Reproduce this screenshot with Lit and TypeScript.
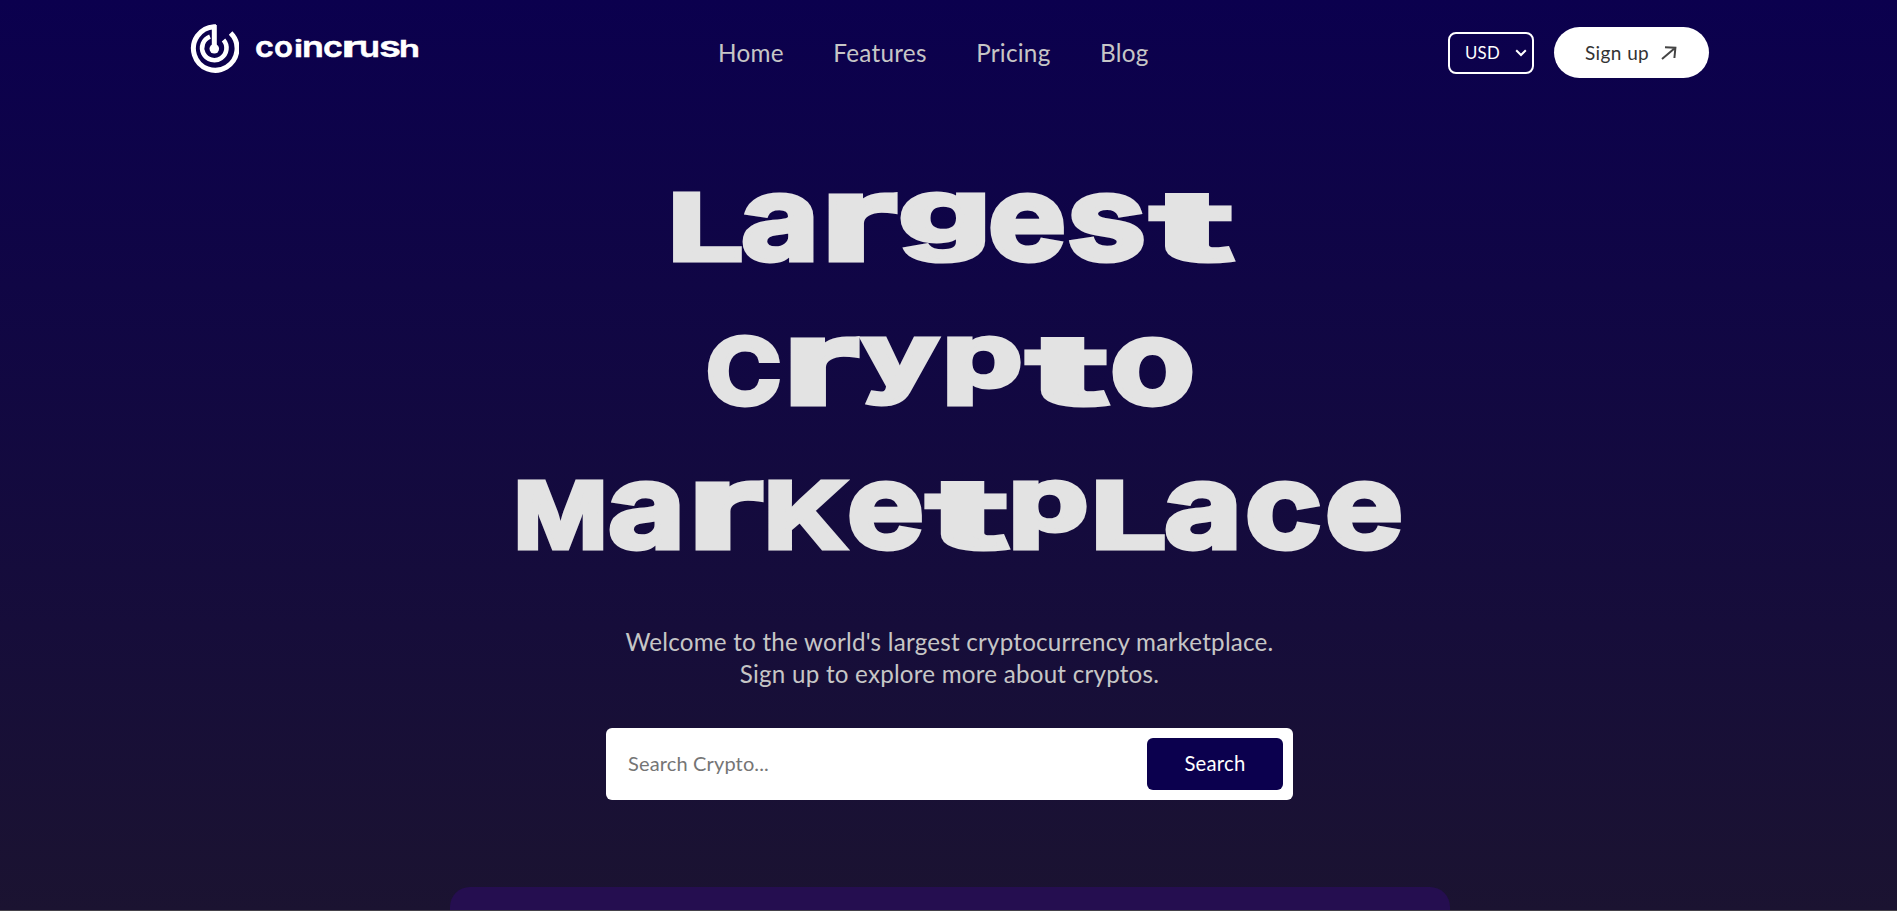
import { LitElement, html, svg, css } from "lit";
import { customElement, property } from "lit/decorators.js";

// One letter of a unicase word: character, left edge, right edge, form.
type Glyph = [string, number, number, string];

// Share of the em that each form occupies above and below the baseline.
const FORMS: Record<string, { up: number; down: number }> = {
  cap: { up: 0.727, down: 0 },
  upper: { up: 0.727, down: 0 },
  low: { up: 0.56, down: 0 },
  tall: { up: 0.74, down: 0 },
  tee: { up: 0.69, down: 0 },
  desc: { up: 0.56, down: 0.2 },
};

@customElement("unicase-word")
class UnicaseWord extends LitElement {
  @property({ attribute: false }) glyphs: Glyph[] = [];
  @property({ type: Number }) width = 0;
  @property({ type: Number }) height = 0;
  @property({ type: Number }) stroke = 5;
  @property({ type: Number }) weight = 750;

  static styles = css`
    :host { display: block; letter-spacing: 0; }
    svg { display: block; overflow: visible; }
    text {
      font-family: Inter, "Liberation Sans", sans-serif;
      fill: currentColor;
      stroke: currentColor;
      stroke-linejoin: miter;
    }
    .upper { text-transform: uppercase; }
  `;

  render() {
    const s = this.stroke;
    const h = this.height - s;
    return html`<svg width=${this.width} height=${this.height}>
      <text stroke-width=${s} font-weight=${this.weight}>${this.glyphs.map(([ch, x0, x1, form]) => {
        const f = FORMS[form];
        const size = h / (f.up + f.down);
        return svg`<tspan class=${form} x=${x0} y=${s / 2 + size * f.up} font-size=${size} textLength=${x1 - x0} lengthAdjust="spacingAndGlyphs">${ch}</tspan>`;
      })}</text>
    </svg>`;
  }
}

const LOGO: Glyph[] = [
  ["c", -1, 18, "low"], ["o", 18, 37, "low"], ["i", 38, 47, "tall"], ["n", 46, 68, "low"],
  ["c", 67, 87, "low"], ["r", 85, 107, "low"], ["u", 103, 124, "low"], ["s", 123, 145, "low"], ["h", 143, 164, "tall"],
];
const LARGEST: Glyph[] = [
  ["L", -3, 72, "cap"], ["a", 70, 148, "low"], ["r", 150, 226, "low"], ["g", 228, 319, "desc"],
  ["e", 317, 395, "low"], ["s", 396, 475, "low"], ["t", 481, 562, "tee"],
];
const CRYPTO: Glyph[] = [
  ["C", -1, 74, "cap"], ["r", 76, 152, "low"], ["y", 155, 231, "desc"], ["p", 236, 315, "desc"],
  ["t", 321, 401, "tee"], ["o", 403, 488, "low"],
];
const MARKETPLACE: Glyph[] = [
  ["M", -3, 90, "cap"], ["a", 91, 168, "low"], ["r", 171, 246, "low"], ["k", 247, 330, "upper"],
  ["e", 330, 407, "low"], ["t", 411, 491, "tee"], ["p", 492, 571, "desc"], ["l", 574, 649, "upper"],
  ["a", 647, 725, "low"], ["c", 728, 805, "low"], ["e", 808, 886, "low"],
];

@customElement("app-root")
class AppRoot extends LitElement {
  static styles = css`
    :host {
      display: block;
      height: 911px;
      overflow: hidden;
      box-sizing: border-box;
      border-bottom: 1px solid #45424a;
      background: linear-gradient(#0b004e, #1b1331);
      font-family: Lato, "Open Sans", sans-serif;
      letter-spacing: 0.25px;
      color: #c6c6c6;
    }
    * { box-sizing: border-box; }
    header { height: 105px; padding: 0 188px 0 190px; display: grid; grid-template-columns: 528px 1fr auto; align-items: center; }
    .logo { display: flex; align-items: center; color: #fff; gap: 17px; padding-bottom: 8px; }
    .logo svg { display: block; }
    nav { display: flex; gap: 49.5px; font-size: 24.3px; padding-bottom: 1px; }
    .actions { display: flex; align-items: center; gap: 20px; }
    .currency { width: 86px; height: 42px; border: 2px solid #fff; border-radius: 8px; color: #fff; display: flex; align-items: center; justify-content: space-between; padding: 0 5px 0 15px; font-size: 16.8px; }
    .signup { width: 155px; height: 51px; border-radius: 26px; background: #fff; color: #333; display: flex; align-items: center; gap: 12px; padding-left: 31px; font-size: 19px; }
    .signup span { padding-bottom: 1px; letter-spacing: 0.4px; }
    main { display: flex; flex-direction: column; align-items: center; padding: 86px 0 0 2px; }
    h1 { margin: 0; color: #e3e3e3; display: flex; flex-direction: column; align-items: center; gap: 73px; }
    .marketplace { padding-left: 18px; }
    .largest { padding-left: 4px; }
    p { margin: 76px 0 0; font-size: 24.2px; line-height: 32px; text-align: center; letter-spacing: 0.22px; }
    p span { display: block; }
    form { margin-top: 38px; width: 687px; height: 72px; border-radius: 6px; background: #fff; display: flex; align-items: center; padding: 0 10px 0 22px; }
    .hint { flex: 1; font-size: 20px; color: #757575; padding-bottom: 2px; letter-spacing: 0.15px; }
    .search { width: 136px; height: 52px; border-radius: 6px; background: #0b004e; color: #fff; display: grid; place-items: center; font-size: 20.3px; padding-bottom: 2px; }
    .panel { width: 1000px; height: 40px; margin-top: 87px; border-radius: 20px 20px 0 0; background: #250e50; }
  `;

  render() {
    return html`
      <header>
        <div class="logo">
          <svg width="49" height="49" viewBox="0 0 49 49" fill="none" stroke="#fff">
            <path d="M26 2.7H24A21.8 21.8 0 1 0 40.6 9" stroke-width="5" />
            <path d="M24.3 1V24" stroke-width="5" />
            <path d="M20 12.6A12.2 12.2 0 1 0 33.5 16" stroke-width="4.6" />
            <circle cx="24.3" cy="24.8" r="4.8" fill="#fff" stroke="none" />
          </svg>
          <unicase-word .glyphs=${LOGO} .width=${163} .height=${17} .stroke=${0.5} .weight=${600}></unicase-word>
        </div>
        <nav><span>Home</span><span>Features</span><span>Pricing</span><span>Blog</span></nav>
        <div class="actions">
          <div class="currency"><span>USD</span>
            <svg width="12" height="8" viewBox="0 0 12 8" fill="none" stroke="#fff" stroke-width="2"><path d="M1.2 1.2L6 6L10.8 1.2" /></svg>
          </div>
          <div class="signup"><span>Sign up</span>
            <svg width="16" height="14" viewBox="0 0 16 14" fill="none" stroke="#444" stroke-width="2"><path d="M1 13L14 2M4 1.3L14.4 1.8L13.4 12" /></svg>
          </div>
        </div>
      </header>
      <main>
        <h1>
          <unicase-word class="largest" .glyphs=${LARGEST} .width=${562} .height=${71}></unicase-word>
          <unicase-word class="crypto" .glyphs=${CRYPTO} .width=${486} .height=${71}></unicase-word>
          <unicase-word class="marketplace" .glyphs=${MARKETPLACE} .width=${884} .height=${71}></unicase-word>
        </h1>
        <p><span>Welcome to the world's largest cryptocurrency marketplace.</span><span>Sign up to explore more about cryptos.</span></p>
        <form><span class="hint">Search Crypto...</span><div class="search"><span>Search</span></div></form>
        <div class="panel"></div>
      </main>
    `;
  }
}
